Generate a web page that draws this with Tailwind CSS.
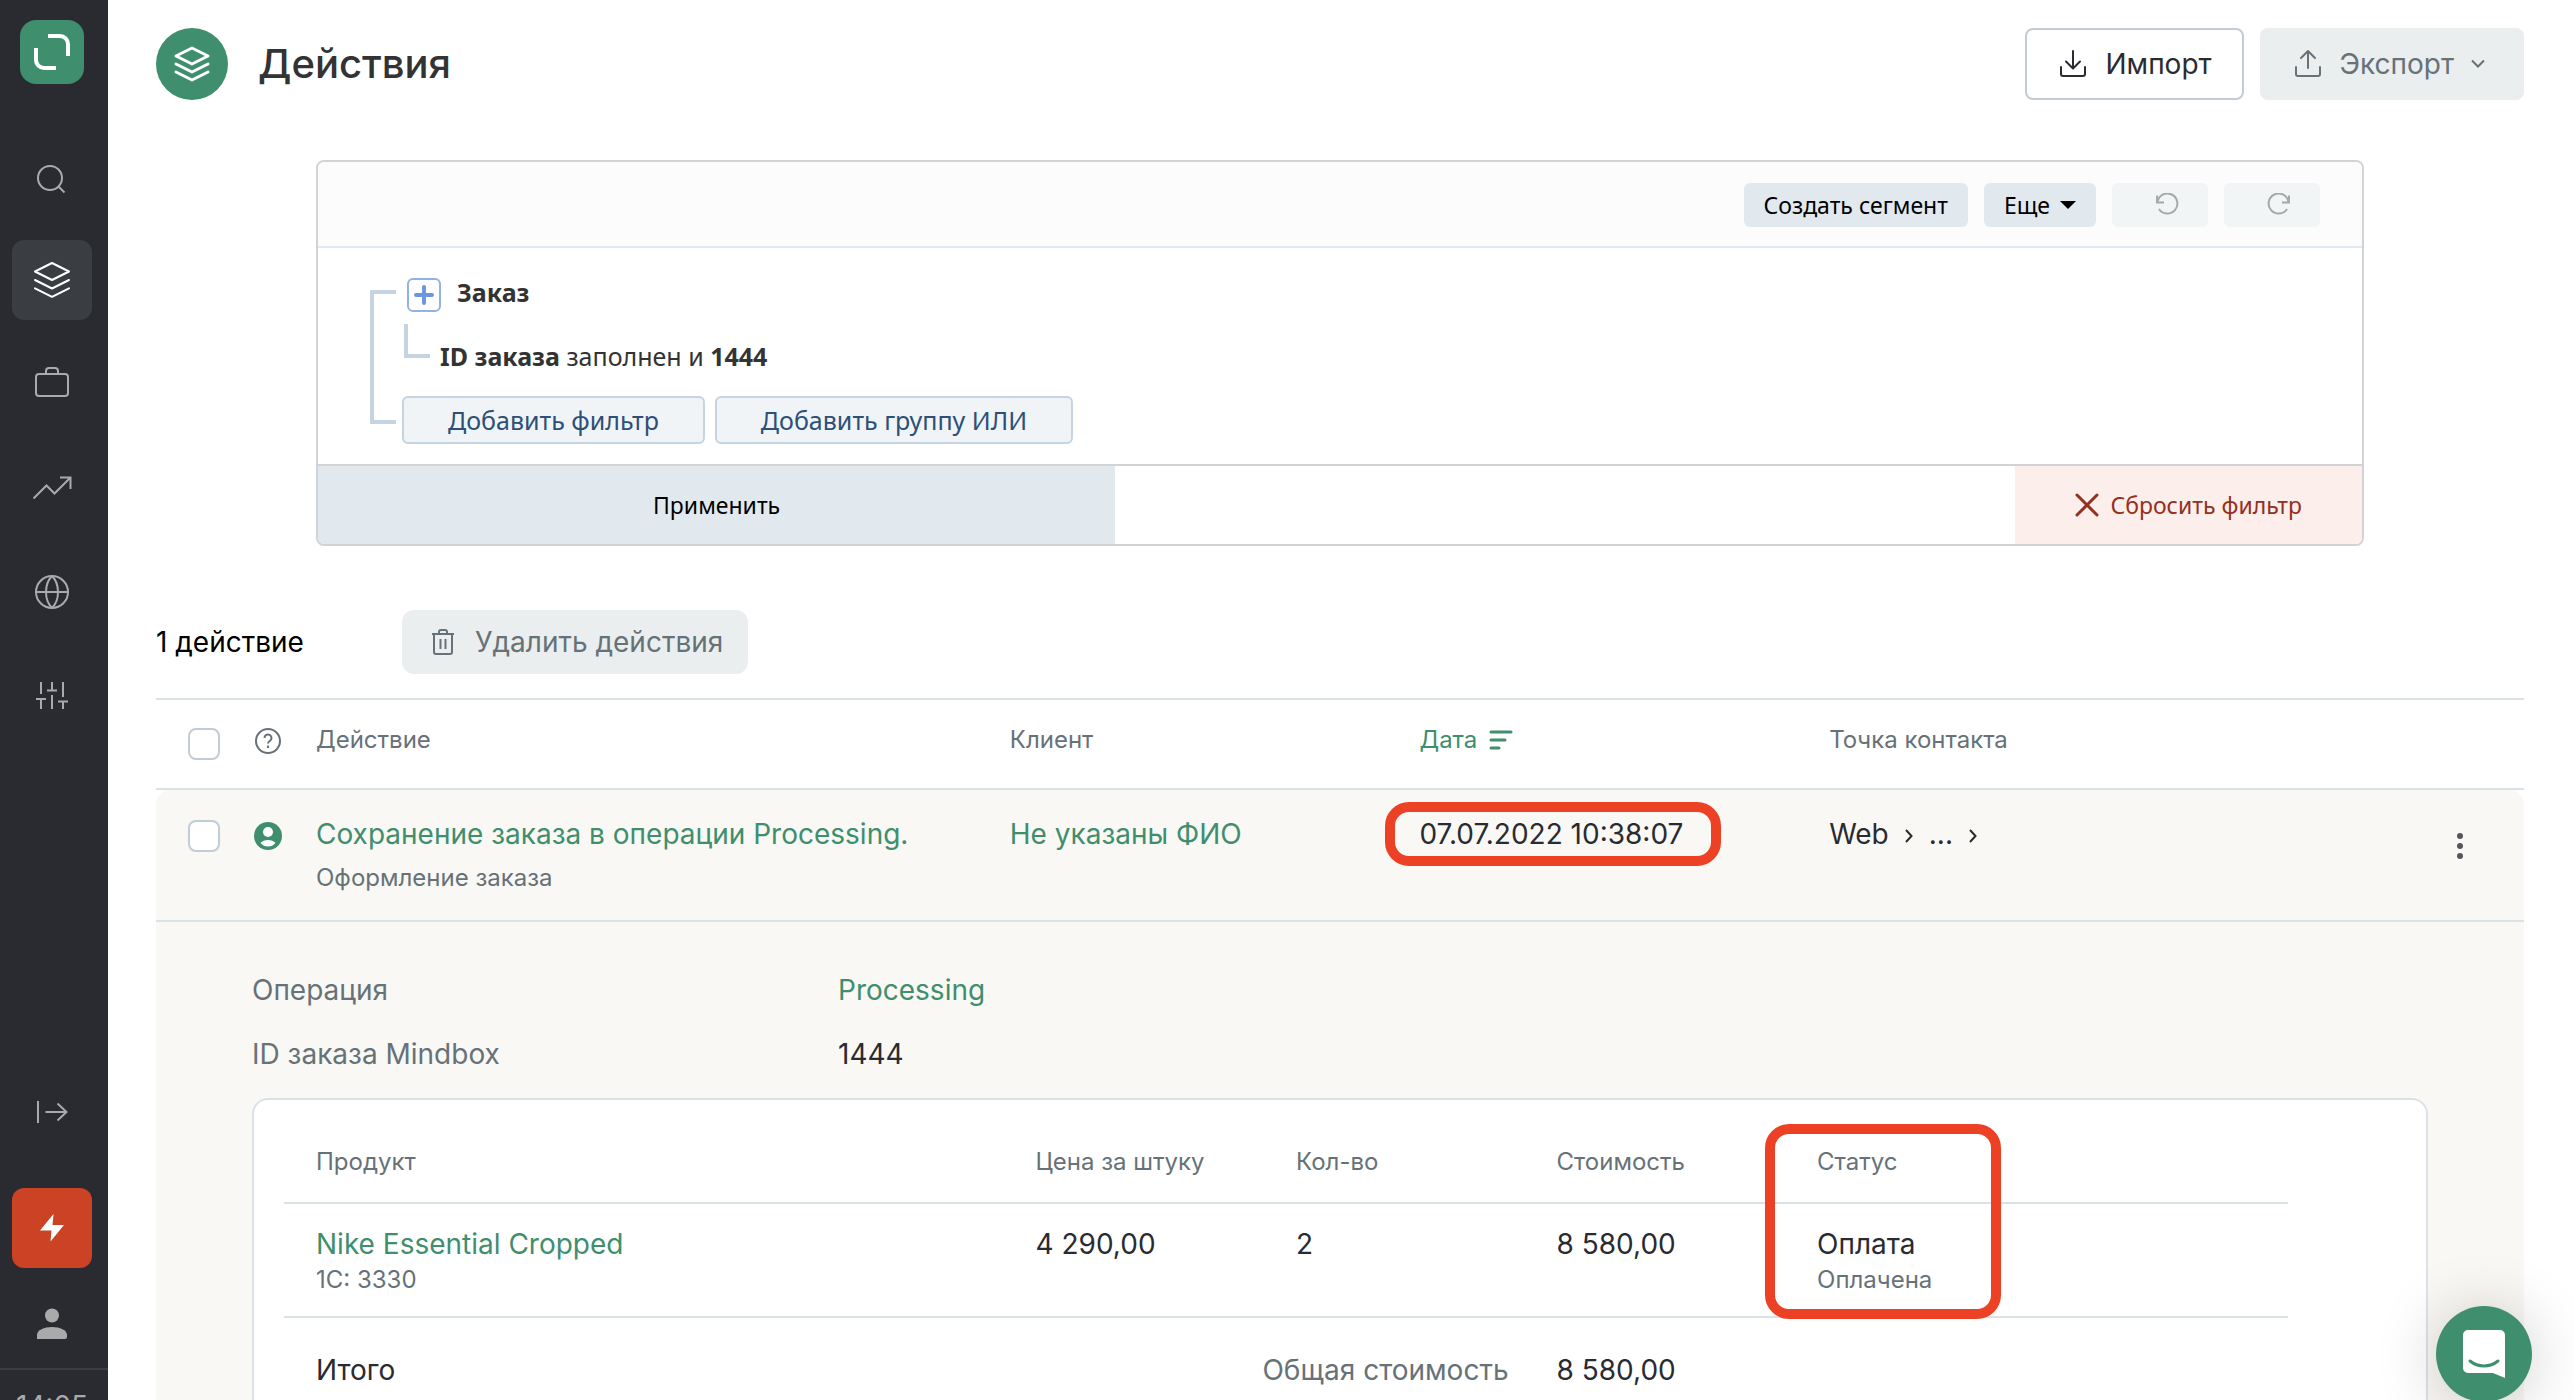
<!DOCTYPE html>
<html lang="ru">
<head>
<meta charset="utf-8">
<meta name="viewport" content="width=device-width, initial-scale=1">
<title>Действия</title>
<script src="https://cdn.jsdelivr.net/npm/@tailwindcss/browser@4"></script>
</head>
<body class="flex h-screen overflow-hidden bg-white font-[Inter,sans-serif] text-[28px] leading-10 text-[#2a2b31]">

<nav aria-label="Главное меню" class="flex w-[108px] shrink-0 flex-col items-center overflow-hidden bg-[#2a2b31] px-3 pt-5 text-[#a9aaac]">
  <a href="#" aria-label="Mindbox" class="mr-1 flex size-16 shrink-0 items-center justify-center rounded-2xl bg-[#3f8e6d]">
    <svg class="size-9 text-white" viewBox="0 0 36 36" fill="none" stroke="currentColor" stroke-width="4"><path d="M14 2h12a8 8 0 0 1 8 8v12M2 14v12a8 8 0 0 0 8 8h12"/></svg>
  </a>
  <div class="mt-[52px] mr-1 flex flex-col gap-6">
    <a href="#" aria-label="Поиск" class="flex size-20 items-center justify-center rounded-xl">
      <svg class="size-10" viewBox="0 0 40 40" fill="none" stroke="currentColor" stroke-width="2"><circle cx="18" cy="22" r="12"/><path d="M26.500 30.500l6 6"/></svg>
    </a>
    <a href="#" aria-label="Действия" class="flex size-20 items-center justify-center rounded-xl bg-[#3a3d42] text-white">
      <svg class="size-10" viewBox="0 0 40 40" fill="none" stroke="currentColor" stroke-width="2" stroke-linejoin="round" stroke-linecap="round"><path d="M20 3l17 8.500-17 8.500-17-8.500zM3 20l17 8.500 17-8.500M3 28.300l17 8.500 17-8.500"/></svg>
    </a>
    <a href="#" aria-label="Кампании" class="flex size-20 items-center justify-center rounded-xl">
      <svg class="size-10" viewBox="0 0 40 40" fill="none" stroke="currentColor" stroke-width="2"><rect x="4" y="10" width="32" height="22" rx="3"/><path d="M14 10V7a3 3 0 0 1 3-3h6a3 3 0 0 1 3 3v3"/></svg>
    </a>
    <a href="#" aria-label="Отчеты" class="flex size-20 items-center justify-center rounded-xl">
      <svg class="size-10" viewBox="0 0 40 40" fill="none" stroke="currentColor" stroke-width="2"><path d="M1.500 30.500L14.500 17.500l8 8L38 10M28 9.500h10.500V21"/></svg>
    </a>
    <a href="#" aria-label="Сайты" class="flex size-20 items-center justify-center rounded-xl">
      <svg class="size-10" viewBox="0 0 40 40" fill="none" stroke="currentColor" stroke-width="2"><circle cx="20" cy="20" r="16"/><path d="M4 20h32M20 4c-8 8-8 24 0 32M20 4c8 8 8 24 0 32"/></svg>
    </a>
    <a href="#" aria-label="Настройки" class="flex size-20 items-center justify-center rounded-xl">
      <svg class="size-10" viewBox="0 0 40 40" fill="none" stroke="currentColor" stroke-width="2"><path d="M9 6v12M9 23v10M4 23h10M20 6v8M15 14.500h10M20 19v14M31 6v15M31 25v8M26 25.500h10"/></svg>
    </a>
  </div>
  <div class="mt-auto mr-1 flex flex-col items-center">
    <button type="button" aria-label="Развернуть меню" class="flex size-20 items-center justify-center">
      <svg class="size-10" viewBox="0 0 40 40" fill="none" stroke="currentColor" stroke-width="2"><path d="M6 9v22M13.500 20h21M25.500 11.500l9 8.500-9 8.500"/></svg>
    </button>
    <button type="button" aria-label="Быстрые действия" class="mt-9 flex size-20 items-center justify-center rounded-xl bg-[#cb4224]">
      <svg class="size-10" viewBox="0 0 40 40" fill="#fff"><path d="M21.500 6L8 22.500h11.500L18.500 33.500 32 17H20.500z"/></svg>
    </button>
    <a href="#" aria-label="Профиль" class="flex h-[100px] w-20 items-center justify-center pt-3">
      <svg class="size-10" viewBox="0 0 40 40" fill="currentColor"><circle cx="20" cy="11.500" r="7"/><path d="M5 35v-4c0-5 7-8 15-8s15 3 15 8v2a2 2 0 0 1-2 2z"/></svg>
    </a>
  </div>
  <div class="-mx-3 h-8 shrink-0 self-stretch overflow-hidden border-t-2 border-[#3a3d42] pt-4 pr-1 text-center">14:05</div>
</nav>

<main class="min-w-0 flex-1 overflow-y-auto pr-[50px] pl-12 [scrollbar-width:none]">
  <header class="flex items-center gap-4 pt-7">
    <div class="mr-3.5 flex size-[72px] items-center justify-center rounded-full bg-[#3f8e6d] text-white">
      <svg class="size-10" viewBox="0 0 40 40" fill="none" stroke="currentColor" stroke-width="3" stroke-linejoin="round" stroke-linecap="round"><path d="M20 4l16 8-16 8-16-8zM4 20l16 8 16-8M4 28l16 8 16-8"/></svg>
    </div>
    <h1 class="mr-auto text-[40px] leading-[48px] font-medium text-[#333]">Действия</h1>
    <button type="button" class="flex h-[72px] items-center gap-4 rounded-lg border-2 border-[#c1cdd4] px-[30px]">
      <svg class="size-8" viewBox="0 0 32 32" fill="none" stroke="currentColor" stroke-width="2" stroke-linecap="round" stroke-linejoin="round"><path d="M16 3v17M9 13.500l7 7 7-7M4 19v7a2 2 0 0 0 2 2h20a2 2 0 0 0 2-2v-7"/></svg>
      Импорт
    </button>
    <button type="button" class="flex h-[72px] items-center gap-4 rounded-lg bg-[#eaeeef] pr-[38px] pl-8 text-[#667278]">
      <svg class="size-8" viewBox="0 0 32 32" fill="none" stroke="currentColor" stroke-width="2" stroke-linecap="round" stroke-linejoin="round"><path d="M16 20V3M9 10l7-7 7 7M4 19v7a2 2 0 0 0 2 2h20a2 2 0 0 0 2-2v-7"/></svg>
      Экспорт
      <svg class="size-4" viewBox="0 0 16 16" fill="none" stroke="currentColor" stroke-width="2"><path d="M2 4.500l6 6 6-6"/></svg>
    </button>
  </header>

  <section aria-label="Фильтр" class="mx-40 mt-[60px] overflow-hidden rounded-lg border-2 border-[#d2d3d4] font-['Noto_Sans',sans-serif] text-[25px] leading-8 text-[#333]">
    <div class="flex h-[86px] items-center justify-end gap-4 border-b-2 border-[#e1e9ee] bg-[#fcfcfc] pt-0.5 pr-[42px] text-[23px] text-black">
      <button type="button" class="h-11 rounded-md bg-[#e1e9ef] px-5">Создать сегмент</button>
      <button type="button" class="flex h-11 items-center gap-2.5 rounded-md bg-[#e1e9ef] px-5">Еще
        <svg class="h-4 w-4" viewBox="0 0 16 16" fill="currentColor"><path d="M0 4h16l-8 8z"/></svg>
      </button>
      <button type="button" aria-label="Отменить" class="flex h-11 w-24 items-center justify-center rounded-md bg-[#f1f5f6] pl-3.5 text-[#a6a8aa]">
        <svg class="size-6" viewBox="0 0 24 24" fill="none" stroke="currentColor" stroke-width="2"><path d="M2 2.500v7h7M2.500 9A10 10 0 1 1 4 16"/></svg>
      </button>
      <button type="button" aria-label="Повторить" class="flex h-11 w-24 items-center justify-center rounded-md bg-[#f1f5f6] pl-3.5 text-[#a6a8aa]">
        <svg class="size-6" viewBox="0 0 24 24" fill="none" stroke="currentColor" stroke-width="2"><path d="M22 2.500v7h-7M21.500 9A10 10 0 1 0 20 16"/></svg>
      </button>
    </div>

    <div class="flex gap-1.5 pt-[30px] pr-8 pb-5 pl-[52px]">
      <div class="mt-3 mb-5 w-[26px] shrink-0 border-y-4 border-l-4 border-[#c6d3e0]"></div>
      <div class="flex-1">
        <div class="flex h-[34px] gap-4 pl-[5px]">
          <button type="button" aria-label="Добавить условие" class="flex size-[34px] items-center justify-center rounded-md border-2 border-[#94b1e6]">
            <svg class="size-6" viewBox="0 0 24 24" stroke="#6f96dc" stroke-width="4" stroke-linecap="round"><path d="M12 4v16M4 12h16"/></svg>
          </button>
          <b class="leading-7">Заказ</b>
        </div>
        <div class="mt-3 flex gap-2.5 pl-0.5">
          <div class="h-[34px] w-[26px] border-b-4 border-l-4 border-[#c6d3e0]"></div>
          <p class="mt-4"><b>ID заказа</b> заполнен и <b>1444</b></p>
        </div>
        <div class="mt-6 flex gap-2.5 text-[#2d5078]">
          <button type="button" class="h-12 rounded-md border-2 border-[#c6d3e0] bg-[#f1f4f7] px-11">Добавить фильтр</button>
          <button type="button" class="h-12 rounded-md border-2 border-[#c6d3e0] bg-[#f1f4f7] px-11">Добавить группу ИЛИ</button>
        </div>
      </div>
    </div>

    <div class="flex h-20 justify-between border-t-2 border-[#d2d3d4] text-[23px]">
      <button type="button" class="w-[39%] bg-[#e1e9ef] text-black">Применить</button>
      <button type="button" class="flex items-center gap-3 bg-[#fceeeb] px-[60px] text-[#943021]">
        <svg class="size-6" viewBox="0 0 24 24" stroke="currentColor" stroke-width="3" stroke-linecap="round"><path d="M2 2l20 20M22 2L2 22"/></svg>
        Сбросить фильтр
      </button>
    </div>
  </section>

  <div class="mt-16 flex items-center gap-[98px] text-black">
    <span>1 действие</span>
    <button type="button" class="flex h-16 items-center gap-4 rounded-xl bg-[#eaeeef] px-[25px] text-[#667278]">
      <svg class="size-8" viewBox="0 0 32 32" fill="none" stroke="currentColor" stroke-width="2"><path d="M5 8h22M7 8v18a2 2 0 0 0 2 2h14a2 2 0 0 0 2-2V8M12 8V6a2 2 0 0 1 2-2h4a2 2 0 0 1 2 2v2M13.500 13v10M18.500 13v10"/></svg>
      Удалить действия
    </button>
  </div>

  <table class="mt-6 w-full table-fixed border-t-2 border-[#dbe2e6] text-left">
    <colgroup><col class="w-20"><col class="w-20"><col class="w-[29.3%]"><col class="w-[17.3%]"><col class="w-[17.3%]"><col><col class="w-32"></colgroup>
    <thead class="text-2xl leading-8 text-[#667278]">
      <tr class="h-[90px] border-b-2 border-[#dbe2e6] align-top">
        <th class="pt-7 pl-8"><input type="checkbox" aria-label="Выбрать все" class="block size-8 appearance-none rounded-lg border-2 border-[#c1cdd4] bg-white"></th>
        <th class="pt-[25px] pl-4">
          <svg role="img" aria-label="Справка" class="size-8" viewBox="0 0 32 32" fill="none" stroke="currentColor" stroke-width="2"><circle cx="16" cy="16" r="12"/><path d="M12.500 13a3.500 3.500 0 1 1 5.500 2.800c-1.300.9-2 1.500-2 2.700"/><path d="M16 20.500v2.500"/></svg>
        </th>
        <th class="pt-6 font-normal">Действие</th>
        <th class="pt-6 font-normal">Клиент</th>
        <th class="pt-6 font-normal"><a href="#" class="flex items-center gap-3 text-[#3f8e6d]">Дата
          <svg class="size-6" viewBox="0 0 24 24" stroke="currentColor" stroke-width="3" stroke-linecap="round"><path d="M2 4h20M2 12h14M2 20h8"/></svg></a></th>
        <th class="pt-6 font-normal">Точка контакта</th>
        <td></td>
      </tr>
    </thead>
    <tbody>
      <tr class="h-[132px] border-b-2 border-[#dbe2e6] align-top">
        <td class="rounded-tl-2xl bg-[#f9f8f4] pt-[30px] pl-8"><input type="checkbox" aria-label="Выбрать действие" class="block size-8 appearance-none rounded-lg border-2 border-[#c1cdd4] bg-white"></td>
        <td class="bg-[#f9f8f4] pt-[30px] pl-4">
          <svg class="size-8" viewBox="0 0 32 32"><circle cx="16" cy="16" r="14" fill="#3f8e6d"/><circle cx="16" cy="12" r="5" fill="#fff"/><path d="M8.500 23c1.500-2 4.500-3 7.500-3s6 1 7.500 3c-2 2.500-4.500 3.500-7.500 3.500S10.500 25.500 8.500 23z" fill="#fff"/></svg>
        </td>
        <td class="bg-[#f9f8f4] pt-6">
          <a href="#" class="block text-[#3f8e6d]">Сохранение заказа в операции Processing.</a>
          <div class="mt-2 text-2xl leading-8 text-[#667278]">Оформление заказа</div>
        </td>
        <td class="bg-[#f9f8f4] pt-6"><a href="#" class="text-[#3f8e6d]">Не указаны ФИО</a></td>
        <td class="bg-[#f9f8f4] pt-6"><span class="relative inline-block">07.07.2022 10:38:07<span class="absolute -inset-y-3 -right-[38px] -left-[34px] rounded-3xl border-10 border-[#ed4125]"></span></span></td>
        <td class="bg-[#f9f8f4] pt-6">
          <div class="flex items-center gap-4">Web
            <svg class="mt-1 h-4 w-2" viewBox="0 0 8 16" fill="none" stroke="currentColor" stroke-width="2"><path d="M1 2l5.500 6L1 14"/></svg>
            <span>...</span>
            <svg class="mt-1 h-4 w-2" viewBox="0 0 8 16" fill="none" stroke="currentColor" stroke-width="2"><path d="M1 2l5.500 6L1 14"/></svg>
          </div>
        </td>
        <td class="rounded-tr-2xl bg-[#f9f8f4] pt-10 pl-12">
          <button type="button" aria-label="Меню" class="block"><svg class="size-8" viewBox="0 0 32 32" fill="#555659"><circle cx="16" cy="6" r="3"/><circle cx="16" cy="16" r="3"/><circle cx="16" cy="26" r="3"/></svg></button>
        </td>
      </tr>
      <tr>
        <td colspan="7" class="bg-[#f9f8f4] px-24 pt-12 pb-12 align-top">
          <dl class="grid grid-cols-[586px_1fr] gap-y-6 text-[#667278]">
            <dt>Операция</dt><dd><a href="#" class="text-[#3f8e6d]">Processing</a></dd>
            <dt>ID заказа Mindbox</dt><dd class="text-[#2a2b31]">1444</dd>
          </dl>
          <div class="mt-6 rounded-2xl border-2 border-[#dbe2e6] bg-white pr-[138px] pb-12 pl-[30px]">
            <table class="w-full table-fixed">
              <colgroup><col class="w-[37.5%]"><col class="w-[13%]"><col class="w-[13%]"><col class="w-[13%]"><col></colgroup>
              <thead class="text-2xl leading-8 text-[#667278]">
                <tr class="h-[103px] border-b-2 border-[#dbe2e6] align-top">
                  <th class="pt-[46px] pl-8 font-normal">Продукт</th>
                  <th class="pt-[46px] font-normal">Цена за штуку</th>
                  <th class="pt-[46px] font-normal">Кол-во</th>
                  <th class="pt-[46px] font-normal">Стоимость</th>
                  <th class="relative pt-[46px] font-normal">Статус<span class="absolute top-6 -left-[52px] h-[195px] w-[236px] rounded-3xl border-10 border-[#ed4125]"></span></th>
                </tr>
              </thead>
              <tbody class="align-top">
                <tr class="h-[114px] border-b-2 border-[#dbe2e6]">
                  <td class="pt-5 pl-8"><a href="#" class="block text-[#3f8e6d]">Nike Essential Cropped</a><div class="text-2xl leading-8 text-[#667278]">1C: 3330</div></td>
                  <td class="pt-5">4 290,00</td>
                  <td class="pt-5">2</td>
                  <td class="pt-5">8 580,00</td>
                  <td class="pt-5">Оплата<div class="text-2xl leading-8 text-[#667278]">Оплачена</div></td>
                </tr>
                <tr>
                  <td class="pt-8 pl-8">Итого</td>
                  <td colspan="2" class="pt-8 pr-12 text-right text-[#667278]">Общая стоимость</td>
                  <td class="pt-8">8 580,00</td>
                  <td></td>
                </tr>
              </tbody>
            </table>
          </div>
        </td>
      </tr>
    </tbody>
  </table>
</main>

<button type="button" aria-label="Открыть чат" class="fixed right-[42px] -bottom-0.5 flex size-24 items-center justify-center rounded-full bg-[#3f8e6d] shadow-[0_4px_64px_rgba(0,0,0,0.2)]">
  <svg class="size-12" viewBox="0 0 48 48"><path d="M8 0h32a5 5 0 0 1 5 5v43l-12-5H8a5 5 0 0 1-5-5V5a5 5 0 0 1 5-5z" fill="#fff"/><path d="M10 31c8 6.500 20 6.500 28 0" fill="none" stroke="#3f8e6d" stroke-width="3" stroke-linecap="round"/></svg>
</button>
</body>
</html>
